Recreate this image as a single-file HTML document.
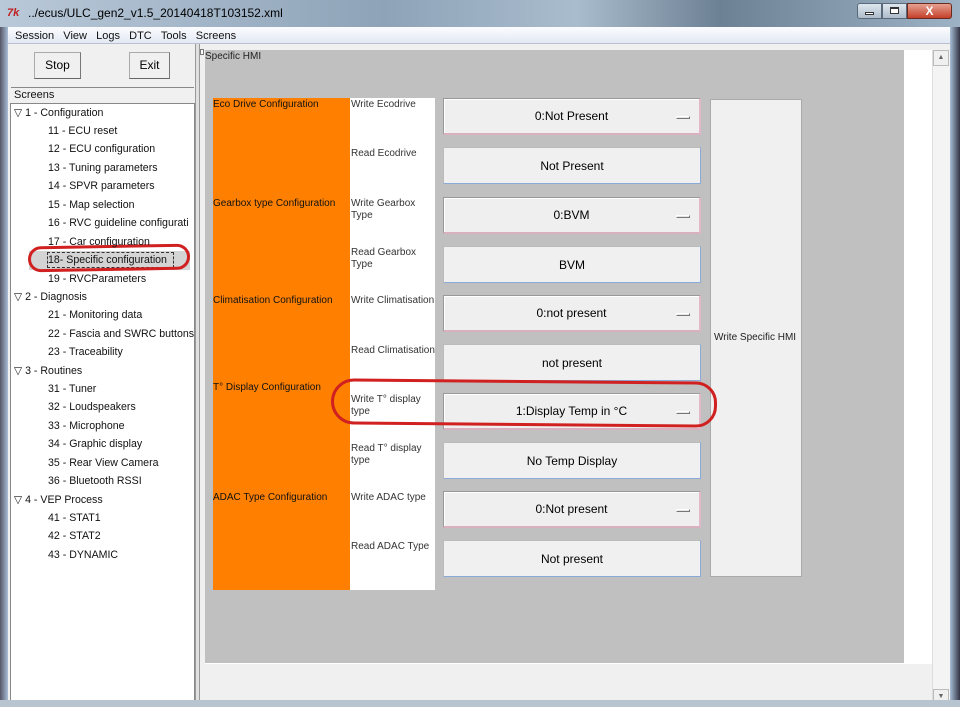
<!DOCTYPE html>
<html><head><meta charset="utf-8"><style>
*{margin:0;padding:0;box-sizing:border-box}
body{width:960px;height:707px;overflow:hidden;position:relative;background:#c9d8e8;font-family:"Liberation Sans",sans-serif;font-size:11px;color:#000}
.a{position:absolute}
.t{font-size:11px;color:#111;white-space:nowrap}
.btn{position:absolute;background:#f0f0f0;border:1px solid #aaa;border-right-color:#777;border-bottom-color:#666;font-size:12px;text-align:center}
.cb{position:absolute;left:443px;width:258px;height:37px;background:#efefef;border:1px solid #999;border-right:2px solid #e0b8c8;border-bottom:2px solid #d8b0c0;box-shadow:inset 1px 1px 0 #fff;font-size:12px;text-align:center;line-height:34px}
.cb i{position:absolute;right:9px;top:17px;width:14px;height:3px;border:1px solid #777;border-top-color:#fff;border-left-color:#fff;background:#e4e4e4}
.rb{position:absolute;left:443px;width:258px;height:37px;background:#f0f0f0;border:1px solid #bbb;border-bottom:1px solid #8aaad8;border-right:1px solid #8aaad8;font-size:12px;text-align:center;line-height:36px}
.tr{position:absolute;font-size:10.6px;color:#111;white-space:nowrap}
</style></head><body>
<div class="a" style="left:0;top:0;width:960px;height:27px;background:linear-gradient(90deg,#b9c9d9,#8ea3b8 40%,#a9bccd 60%,#6d8194 75%,#9db2c5)"></div>
<div class="a" style="left:7px;top:7px;color:#c02020;font-size:11px;font-weight:bold;font-style:italic">7k</div>
<div class="a" style="left:28px;top:6px;font-size:12px;color:#000">../ecus/ULC_gen2_v1.5_20140418T103152.xml</div>
<div class="a" style="left:857px;top:3px;width:25px;height:16px;background:linear-gradient(#dde6ee,#aebccb);border:1px solid #5a6a7a;border-radius:3px 0 0 3px"></div>
<div class="a" style="left:865px;top:12px;width:9px;height:3px;background:#fff;border:1px solid #333"></div>
<div class="a" style="left:882px;top:3px;width:25px;height:16px;background:linear-gradient(#dde6ee,#aebccb);border:1px solid #5a6a7a"></div>
<div class="a" style="left:890px;top:7px;width:9px;height:7px;border:1px solid #333;border-top-width:2px;background:#fff"></div>
<div class="a" style="left:907px;top:3px;width:45px;height:16px;background:linear-gradient(#e6a090,#c4402a);border:1px solid #6a2a20;border-radius:0 3px 3px 0;color:#fff;font-weight:bold;text-align:center;font-size:12px;line-height:14px">X</div>
<div class="a" style="left:8px;top:27px;width:942px;height:680px;background:#f0f0f0"></div>
<div class="a" style="left:8px;top:27px;width:942px;height:17px;background:linear-gradient(#fbfcfe,#e3e9f3);border-bottom:1px solid #b9c2d0"></div>
<div class="a t" style="left:15px;top:30px;font-size:11px">Session&nbsp;&nbsp;&nbsp;View&nbsp;&nbsp;&nbsp;Logs&nbsp;&nbsp;&nbsp;DTC&nbsp;&nbsp;&nbsp;Tools&nbsp;&nbsp;&nbsp;Screens</div>
<div class="btn" style="left:34px;top:52px;width:47px;height:27px;line-height:25px">Stop</div>
<div class="btn" style="left:129px;top:52px;width:41px;height:27px;line-height:25px">Exit</div>
<div class="a" style="left:11px;top:87px;width:183px;height:1px;background:#888"></div>
<div class="a t" style="left:14px;top:89px">Screens</div>
<div class="a" style="left:10px;top:103px;width:185px;height:601px;background:#fff;border:1px solid #888"></div>
<div class="a" style="left:195px;top:44px;width:5px;height:663px;background:#e0e0e0;border-left:1px solid #999;border-right:1px solid #999"></div>
<div class="a" style="left:29px;top:251px;width:161px;height:19px;background:#d4d4d4"></div>
<div class="a" style="left:47px;top:252px;width:127px;height:16px;border:1px dashed #333"></div>
<div class="a" style="left:28px;top:245px;width:162px;height:26px;border:3px solid #d02020;border-radius:14px;transform:rotate(-1deg)"></div>
<div class="tr" style="left:14px;top:107px">▽ 1 - Configuration</div>
<div class="tr" style="left:48px;top:125px">11 - ECU reset</div>
<div class="tr" style="left:48px;top:143px">12 - ECU configuration</div>
<div class="tr" style="left:48px;top:162px">13 - Tuning parameters</div>
<div class="tr" style="left:48px;top:180px">14 - SPVR parameters</div>
<div class="tr" style="left:48px;top:199px">15 - Map selection</div>
<div class="tr" style="left:48px;top:217px">16 - RVC guideline configurati</div>
<div class="tr" style="left:48px;top:236px">17 - Car configuration</div>
<div class="tr" style="left:48px;top:254px">18- Specific configuration</div>
<div class="tr" style="left:48px;top:273px">19 - RVCParameters</div>
<div class="tr" style="left:14px;top:291px">▽ 2 - Diagnosis</div>
<div class="tr" style="left:48px;top:309px">21 - Monitoring data</div>
<div class="tr" style="left:48px;top:328px">22 - Fascia and SWRC buttons</div>
<div class="tr" style="left:48px;top:346px">23 - Traceability</div>
<div class="tr" style="left:14px;top:365px">▽ 3 - Routines</div>
<div class="tr" style="left:48px;top:383px">31 - Tuner</div>
<div class="tr" style="left:48px;top:401px">32 - Loudspeakers</div>
<div class="tr" style="left:48px;top:420px">33 - Microphone</div>
<div class="tr" style="left:48px;top:438px">34 - Graphic display</div>
<div class="tr" style="left:48px;top:457px">35 - Rear View Camera</div>
<div class="tr" style="left:48px;top:475px">36 - Bluetooth RSSI</div>
<div class="tr" style="left:14px;top:494px">▽ 4 - VEP Process</div>
<div class="tr" style="left:48px;top:512px">41 - STAT1</div>
<div class="tr" style="left:48px;top:530px">42 - STAT2</div>
<div class="tr" style="left:48px;top:549px">43 - DYNAMIC</div>
<div class="a" style="left:205px;top:50px;width:727px;height:614px;background:#fff"></div>
<div class="a" style="left:205px;top:50px;width:699px;height:613px;background:#c0c0c0"></div>
<div class="a" style="left:932px;top:50px;width:18px;height:656px;background:#f4f4f4;border-left:1px solid #ddd"></div>
<div class="a" style="left:933px;top:50px;width:16px;height:16px;background:#f0f0f0;border:1px solid #bbb;font-size:7px;text-align:center;color:#666;line-height:14px">▲</div>
<div class="a" style="left:933px;top:689px;width:16px;height:16px;background:#f0f0f0;border:1px solid #bbb;font-size:7px;text-align:center;color:#666;line-height:14px">▼</div>
<div class="a" style="left:200px;top:49px;width:4px;height:6px;border:1px solid #777;background:#fff"></div>
<div class="a t" style="left:205px;top:51px;font-size:10px;color:#222">Specific HMI</div>
<div class="a" style="left:213px;top:98px;width:137px;height:492px;background:#ff8000"></div>
<div class="a" style="left:350px;top:98px;width:85px;height:492px;background:#fff"></div>
<div class="a t" style="left:213px;top:99px;font-size:10px">Eco Drive Configuration</div>
<div class="a t" style="left:213px;top:198px;font-size:10px">Gearbox type Configuration</div>
<div class="a t" style="left:213px;top:295px;font-size:10px">Climatisation Configuration</div>
<div class="a t" style="left:213px;top:382px;font-size:10px">T° Display Configuration</div>
<div class="a t" style="left:213px;top:492px;font-size:10px">ADAC Type Configuration</div>
<div class="a t" style="left:351px;top:99px;font-size:10px;color:#333">Write Ecodrive</div>
<div class="a t" style="left:351px;top:148px;font-size:10px;color:#333">Read Ecodrive</div>
<div class="a t" style="left:351px;top:198px;font-size:10px;color:#333;line-height:12px">Write Gearbox<br>Type</div>
<div class="a t" style="left:351px;top:247px;font-size:10px;color:#333;line-height:12px">Read Gearbox<br>Type</div>
<div class="a t" style="left:351px;top:295px;font-size:10px;color:#333">Write Climatisation</div>
<div class="a t" style="left:351px;top:345px;font-size:10px;color:#333">Read Climatisation</div>
<div class="a t" style="left:351px;top:394px;font-size:10px;color:#333;line-height:12px">Write T° display<br>type</div>
<div class="a t" style="left:351px;top:443px;font-size:10px;color:#333;line-height:12px">Read T° display<br>type</div>
<div class="a t" style="left:351px;top:492px;font-size:10px;color:#333">Write ADAC type</div>
<div class="a t" style="left:351px;top:541px;font-size:10px;color:#333">Read ADAC Type</div>
<div class="cb" style="top:98px">0:Not Present<i></i></div>
<div class="rb" style="top:147px">Not Present</div>
<div class="cb" style="top:197px">0:BVM<i></i></div>
<div class="rb" style="top:246px">BVM</div>
<div class="cb" style="top:295px">0:not present<i></i></div>
<div class="rb" style="top:344px">not present</div>
<div class="cb" style="top:393px">1:Display Temp in °C<i></i></div>
<div class="rb" style="top:442px">No Temp Display</div>
<div class="cb" style="top:491px">0:Not present<i></i></div>
<div class="rb" style="top:540px">Not present</div>
<div class="a" style="left:710px;top:99px;width:92px;height:478px;background:#f0f0f0;border:1px solid #aaa;font-size:10px;line-height:476px;padding-left:3px;color:#222">Write Specific HMI</div>
<div class="a" style="left:331px;top:380px;width:386px;height:46px;border:3px solid #d02020;border-radius:24px 22px 22px 24px;transform:rotate(0.5deg)"></div>
<div class="a" style="left:0;top:700px;width:960px;height:7px;background:#b8c4d0"></div>
<div class="a" style="left:0;top:27px;width:8px;height:673px;background:linear-gradient(90deg,#556,#a8bed6)"></div>
<div class="a" style="left:950px;top:27px;width:10px;height:673px;background:linear-gradient(90deg,#a8bed6,#334)"></div>
</body></html>
